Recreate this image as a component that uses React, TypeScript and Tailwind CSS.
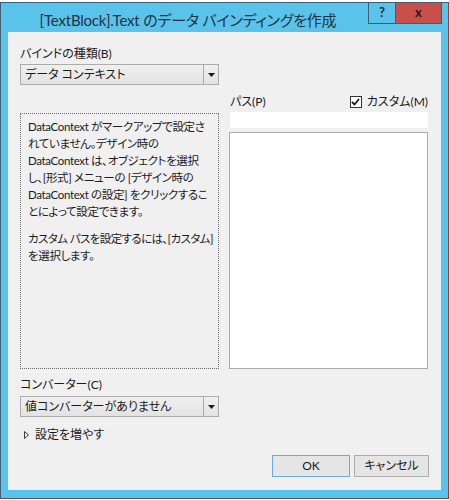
const font = "[font-family:'Lato','Noto_Sans_CJK_JP',sans-serif] [font-feature-settings:'palt']";

function Combo({ text }: { text: string }) {
  return (
    <div className="flex h-[21px] w-[199px] border border-[#acacac] bg-gradient-to-b from-[#f0f0f0] to-[#e3e3e3]">
      <div className="flex flex-1 items-center pl-[4px] text-[12px] text-[#1b1b1b]">{text}</div>
      <div className="flex w-[15px] items-center justify-center border-l border-[#acacac]">
        <svg width="7" height="4" viewBox="0 0 7 4">
          <path d="M0 0h7L3.5 4z" fill="#1b1b1b" />
        </svg>
      </div>
    </div>
  );
}

export default function App() {
  const info = [
    'DataContext がマークアップで設定さ',
    'れていません。デザイン時の',
    'DataContext は、オブジェクトを選択',
    'し、[形式] メニューの [デザイン時の',
    'DataContext の設定] をクリックするこ',
    'とによって設定できます。',
  ];

  return (
    <div className={`h-[500px] w-[449px] bg-white pt-[2px] ${font}`}>
      <div className="flex h-[497px] w-[449px] flex-col border border-[#3f5c70] bg-[#5ac3ea]">
        {/* Title bar */}
        <div className="flex h-[29px] shrink-0 items-start pl-[7px]">
          <div className="flex-1 pt-[7px] text-center text-[15px] leading-[20px] tracking-[-0.2px] text-[#1f3346]">
            [TextBlock].Text のデータ バインディングを作成
          </div>
          <div className="mr-[6px] flex">
            <div className="flex h-[21px] w-[28px] items-center justify-center border border-t-0 border-[#3f5c70] bg-[#5ac3ea] text-[13px] font-bold text-[#1b2a38]">
              ?
            </div>
            <div className="flex h-[21px] w-[46px] items-center justify-center border border-l-0 border-t-0 border-[#3f5c70] bg-[#c9504a] text-[13px] font-bold text-[#1b1b1b]">
              x
            </div>
          </div>
        </div>

        {/* Client area */}
        <div className="mx-[7px] flex h-[458px] flex-col bg-[#f0f0f0] px-[12px] text-[12px] text-[#1b1b1b]">
          <div className="mt-[14px] leading-[16px]">バインドの種類(B)</div>
          <div className="mt-[2px]">
            <Combo text="データ コンテキスト" />
          </div>

          <div className="mt-[7px] flex gap-[10px]">
            <div className="flex w-[199px] flex-col justify-end">
              <div className="h-[256px] border border-dotted border-[#6a6a6a] px-[7px] pt-[4px] text-[11.5px] leading-[17px] tracking-[-0.35px]">
                {info.map((l) => (
                  <div key={l} className="whitespace-nowrap">
                    {l}
                  </div>
                ))}
                <div className="mt-[10px] whitespace-nowrap tracking-[-0.6px]">カスタム パスを設定するには、[カスタム]</div>
                <div className="whitespace-nowrap">を選択します。</div>
              </div>
            </div>

            <div className="flex w-[199px] flex-col">
              <div className="flex h-[20px] items-center justify-between pl-[1px]">
                <span>パス(P)</span>
                <label className="flex items-center gap-[5px]">
                  <span className="flex h-[12px] w-[12px] items-center justify-center border border-[#333333] bg-white">
                    <svg width="9" height="8" viewBox="0 0 9 8">
                      <path d="M1 4l2.5 2.5L8 1" fill="none" stroke="#1b1b1b" strokeWidth="1.8" />
                    </svg>
                  </span>
                  <span>カスタム(M)</span>
                </label>
              </div>
              <div className="ml-[1px] h-[16px] bg-white" />
              <div className="mt-[4px] h-[237px] border border-[#acacac] bg-white" />
            </div>
          </div>

          <div className="mt-[8px] leading-[16px]">コンバーター(C)</div>
          <div className="mt-[3px]">
            <Combo text="値コンバーターがありません" />
          </div>

          <div className="mt-[10px] flex items-center gap-[6px] pl-[4px] leading-[16px]">
            <svg width="5" height="8" viewBox="0 0 5 8">
              <path d="M0.5 0.5L4.5 4L0.5 7.5z" fill="none" stroke="#3a3a3a" strokeWidth="1" />
            </svg>
            <span>設定を増やす</span>
          </div>

          <div className="mt-[12px] flex justify-end gap-[4px]">
            <button className="h-[22px] w-[78px] border border-[#6fa8dc] bg-[#e5e5e5] text-[12px] text-[#1b1b1b]">
              OK
            </button>
            <button className="h-[22px] w-[75px] border border-[#acacac] bg-[#e5e5e5] text-[12px] text-[#1b1b1b]">
              キャンセル
            </button>
          </div>
        </div>
      </div>
    </div>
  );
}
